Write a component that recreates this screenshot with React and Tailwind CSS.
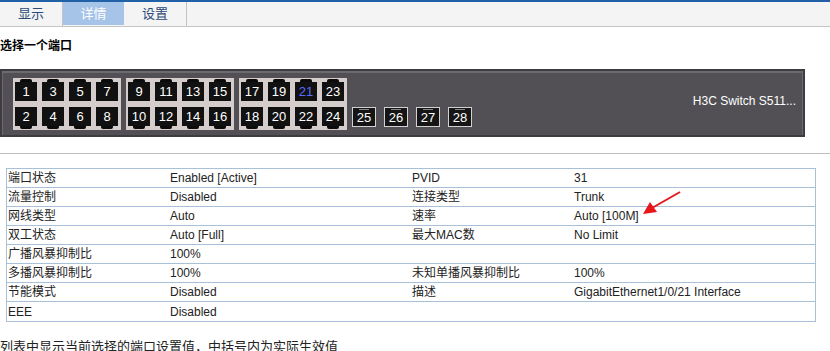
import React from 'react';

const topPorts = [[1, 3, 5, 7], [9, 11, 13, 15], [17, 19, 21, 23]];
const bottomPorts = [[2, 4, 6, 8], [10, 12, 14, 16], [18, 20, 22, 24]];
const sfpPorts = [25, 26, 27, 28];

const rows = [
  ['端口状态', 'Enabled [Active]', 'PVID', '31'],
  ['流量控制', 'Disabled', '连接类型', 'Trunk'],
  ['网线类型', 'Auto', '速率', 'Auto [100M]'],
  ['双工状态', 'Auto [Full]', '最大MAC数', 'No Limit'],
  ['广播风暴抑制比', '100%', '', ''],
  ['多播风暴抑制比', '100%', '未知单播风暴抑制比', '100%'],
  ['节能模式', 'Disabled', '描述', 'GigabitEthernet1/0/21 Interface'],
  ['EEE', 'Disabled', '', ''],
];

const Port = ({ n, top }) => (
  <div className="w-[22px] h-[22px] flex flex-col items-center">
    {top && <div className="w-[12px] h-[3px] rounded-t-[2px] bg-[#0b0b0b]" />}
    <div
      className={`w-[22px] h-[19px] bg-[#111] flex items-center justify-center text-[13px] leading-none ${
        n === 21 ? 'text-[#5b6cff]' : 'text-white'
      }`}
    >
      {n}
    </div>
    {!top && <div className="w-[12px] h-[3px] rounded-b-[2px] bg-[#0b0b0b]" />}
  </div>
);

const App = () => {
  return (
    <div className="relative w-[830px] h-[351px] overflow-hidden bg-white text-[#222] font-['Liberation_Sans','Noto_Sans_CJK_SC',sans-serif]">
      {/* Tabs */}
      <div className="h-[2px] bg-[#2261a8]" />
      <div className="h-[25px] bg-[#f4f4f4] border-b border-[#c6c6c6] flex text-[13px]">
        <div className="w-[63px] flex items-center justify-center text-[#2c4a78] border-r border-[#c4c4c4]">显示</div>
        <div className="w-[61px] h-[23px] flex items-center justify-center bg-[#a6c3e8] text-white">详情</div>
        <div className="w-[63px] flex items-center justify-center text-[#2c4a78] border-r border-[#c4c4c4]">设置</div>
      </div>

      <div className="mt-[12px] h-[14px] text-[12px] leading-[14px] font-bold text-black">选择一个端口</div>

      {/* Switch panel */}
      <div className="mt-[16px] w-[805px] h-[68px] bg-[#3e3c40] p-[2px]">
        <div className="h-full border-t-2 border-x border-[#6c6a6e] bg-[#525055] flex pl-[10px] pt-[5px]">
          <div className="flex gap-[5px] items-start">
            {topPorts.map((grp, gi) => (
              <div key={gi} className="w-[108px] h-[52px] bg-[#d5cccc] px-[2px] py-[1px] flex flex-col gap-[6px]">
                <div className="flex gap-[5px]">
                  {grp.map((n) => (
                    <Port key={n} n={n} top />
                  ))}
                </div>
                <div className="flex gap-[5px]">
                  {bottomPorts[gi].map((n) => (
                    <Port key={n} n={n} />
                  ))}
                </div>
              </div>
            ))}
            <div className="flex gap-[8px] mt-[29px]">
              {sfpPorts.map((n) => (
                <div
                  key={n}
                  className="relative w-[24px] h-[20px] border border-[#d2d2d2] bg-[#161515] flex items-center justify-center text-white text-[13px] leading-none"
                >
                  <div className="absolute top-[1px] left-[6px] w-[10px] h-[1px] bg-[#8a8a8a]" />
                  {n}
                </div>
              ))}
            </div>
          </div>
          <div className="ml-auto mr-[6px] mt-[16px] text-white text-[12px] leading-[14px]">H3C Switch S511...</div>
        </div>
      </div>

      <div className="mt-[16px] h-[1px] bg-[#bdbdbd]" />

      {/* Port detail table */}
      <div className="mt-[14px] ml-[6px] w-[810px] border border-[#a9c1d8] text-[12px]">
        {rows.map((r, i) => (
          <div
            key={i}
            className={`grid grid-cols-[162px_242px_162px_1fr] h-[19px] items-center ${
              i < rows.length - 1 ? 'border-b border-[#a9c1d8]' : ''
            }`}
          >
            {r.map((c, j) => (
              <div key={j} className="pl-[1px] leading-[18px] whitespace-nowrap">{c}</div>
            ))}
          </div>
        ))}
      </div>

      <div className="mt-[17px] text-[13px] leading-[16px] whitespace-nowrap">列表中显示当前选择的端口设置值，中括号内为实际生效值</div>

      {/* Red annotation arrow */}
      <svg className="absolute left-[638px] top-[186px]" width="50" height="34" viewBox="0 0 50 34">
        <line x1="42" y1="6" x2="14" y2="22" stroke="#e8161b" strokeWidth="2" />
        <polygon points="5,28 12,16 19,26" fill="#e8161b" />
      </svg>
    </div>
  );
};

export default App;
